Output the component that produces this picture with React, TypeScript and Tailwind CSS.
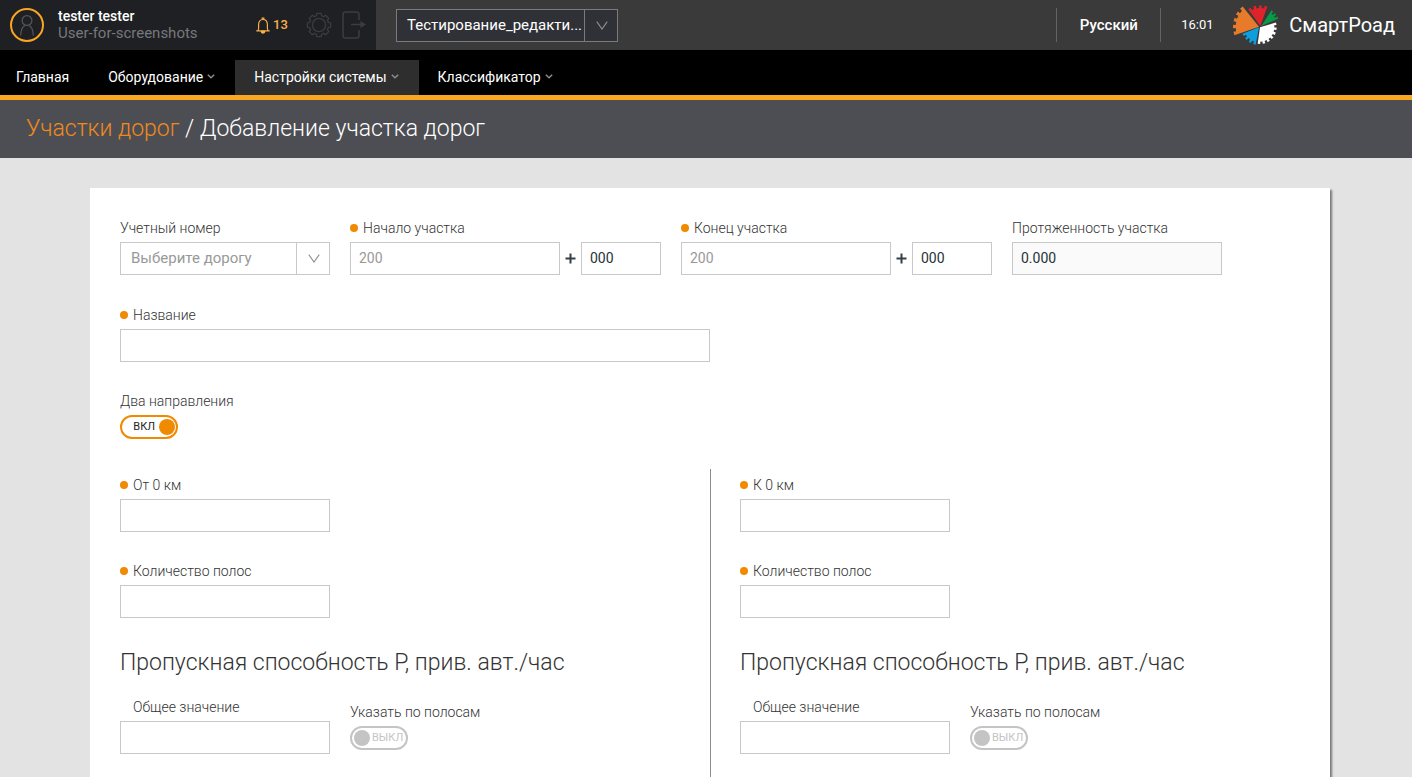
import { useId, useState } from 'react'
import type { ReactNode } from 'react'
import { clsx } from 'clsx'

const NAV_ITEMS = [
  { label: 'Главная', hasMenu: false, active: false },
  { label: 'Оборудование', hasMenu: true, active: false },
  { label: 'Настройки системы', hasMenu: true, active: true },
  { label: 'Классификатор', hasMenu: true, active: false },
]

/* ---------- icons ---------- */

function UserIcon() {
  return (
    <svg viewBox="0 0 34 34" className="size-[34px] shrink-0" fill="none" aria-hidden="true">
      <circle cx="17" cy="17" r="16" stroke="#f9a620" strokeWidth="2" />
      <circle cx="17" cy="12.5" r="4.9" stroke="#55565a" strokeWidth="1.2" />
      <path d="M10.7 27.5c0-5.5 1.2-8 4-10M23.3 27.5c0-5.5-1.2-8-4-10" stroke="#55565a" strokeWidth="1.2" />
    </svg>
  )
}

function BellIcon() {
  return (
    <svg viewBox="0 0 14 17" className="h-[17px] w-3.5 shrink-0" fill="none" stroke="#f9b04a" strokeWidth="1.2" aria-hidden="true">
      <path d="M.3 13.9h13.4M2 13.7c.9-1.2.6-3 .6-5.900 0-3.100 1.800-5.300 4.400-5.300s4.400 2.200 4.400 5.300c0 2.900-.3 4.700.6 5.900" />
      <path d="M6.2 2.5V1h1.6v1.500" />
      <path d="M5.200 14.300c0 2.500 3.600 2.500 3.600 0z" fill="#f9b04a" />
    </svg>
  )
}

function GearIcon() {
  const teeth = Array.from({ length: 8 }, (_, i) => {
    const base = (i * Math.PI) / 4
    return [
      [-0.28, 9.6],
      [-0.19, 11.8],
      [0.19, 11.8],
      [0.28, 9.6],
    ].map(([a, r]) => `${(13 + r * Math.cos(base + a)).toFixed(2)},${(13 + r * Math.sin(base + a)).toFixed(2)}`)
  }).flat()
  return (
    <svg viewBox="0 0 26 26" className="size-[26px]" fill="none" stroke="#3b3c3f" strokeWidth="1.3" strokeLinejoin="round" aria-hidden="true">
      <polygon points={teeth.join(' ')} />
      <circle cx="13" cy="13" r="6.6" />
    </svg>
  )
}

function LogoutIcon() {
  return (
    <svg viewBox="0 0 26 28" className="h-7 w-[26px]" fill="none" stroke="#3b3c3f" strokeWidth="1.5" aria-hidden="true">
      <path d="M17 9V3.500Q17 1 14.500 1H3.500Q1 1 1 3.500v21Q1 27 3.500 27h11Q17 27 17 24.500V19" />
      <path d="M9 13.500h11" />
      <path d="M18.500 10l5.500 3.500-5.500 3.500z" fill="#3b3c3f" stroke="none" />
    </svg>
  )
}

function CaretIcon() {
  return (
    <svg viewBox="0 0 8 5" className="h-[5px] w-2" fill="none" stroke="#8b8b8b" strokeWidth="1.500" aria-hidden="true">
      <path d="M.8.7 4 3.800 7.200.7" />
    </svg>
  )
}

function ArrowIcon() {
  return (
    <svg viewBox="0 0 12 9" className="h-[9px] w-3" fill="none" stroke="#8f8f8f" strokeWidth="1.1" aria-hidden="true">
      <path d="M.8.6 6 8 11.200.6" />
    </svg>
  )
}

// One toothed wedge of the logo. Angles are in degrees, clockwise from the right.
function wedge(cx: number, cy: number, from: number, to: number, outer: number, inner: number, teeth: number) {
  const steps = teeth * 2 - 1
  const pts = [`${cx},${cy}`]
  for (let i = 0; i < steps; i++) {
    const r = i % 2 === 0 ? outer : inner
    for (const k of [i, i + 1]) {
      const a = ((from + ((to - from) * k) / steps) * Math.PI) / 180
      pts.push(`${(cx + r * Math.cos(a)).toFixed(1)},${(cy + r * Math.sin(a)).toFixed(1)}`)
    }
  }
  return pts.join(' ')
}

function LogoIcon() {
  return (
    <svg viewBox="24 12 138 126" className="h-[42px] w-[46px]" aria-hidden="true">
      <polygon points={wedge(102, 80, 161, 231, 78, 70, 5)} fill="#e77b2b" />
      <polygon points={wedge(106, 78, 234, 290, 62, 54, 4)} fill="#df232b" />
      <polygon points={wedge(109, 78, 303, 336, 56, 48, 3)} fill="#069a49" />
      <polygon points={wedge(105, 82, -17, 98, 50, 43, 7)} fill="#ffffff" />
      <polygon points={wedge(102, 82, 101, 159, 53, 45, 4)} fill="#0c9fdd" />
    </svg>
  )
}

/* ---------- form controls ---------- */

const INPUT = 'h-[33px] rounded-none border border-[#c8c8c8] px-2 pb-0.5 text-sm text-[#263238] outline-none placeholder:text-[#999] placeholder:opacity-100'

function Label({ htmlFor, required, indent, children }: { htmlFor: string; required?: boolean; indent?: boolean; children: ReactNode }) {
  return (
    <label htmlFor={htmlFor} className={clsx('flex h-5 items-center gap-[5px] text-sm leading-5 font-light whitespace-nowrap text-[#333]', indent && 'pl-[13px]')}>
      {required && <span className="size-2 rounded-full bg-[#f08a00]" />}
      {children}
    </label>
  )
}

function TextField({ label, required, indent, className }: { label: string; required?: boolean; indent?: boolean; className?: string }) {
  const id = useId()
  return (
    <div className="flex flex-col gap-1">
      <Label htmlFor={id} required={required} indent={indent}>{label}</Label>
      <input id={id} type="text" className={clsx(INPUT, className ?? 'w-[210px]')} />
    </div>
  )
}

function KmField({ label }: { label: string }) {
  const id = useId()
  return (
    <div className="flex flex-col gap-1">
      <Label htmlFor={id} required>{label}</Label>
      <div className="flex items-center">
        <input id={id} type="text" placeholder="200" className={clsx(INPUT, 'w-[210px]')} />
        <svg viewBox="0 0 11 11" className="mx-[5px] size-[11px]" stroke="#33404a" strokeWidth="2" aria-hidden="true">
          <path d="M5.500 0.500v10M0.500 5.500h10" />
        </svg>
        <input type="text" aria-label={`${label}, м`} defaultValue="000" className={clsx(INPUT, 'w-20')} />
      </div>
    </div>
  )
}

function Toggle({ label, defaultOn = false }: { label: string; defaultOn?: boolean }) {
  const id = useId()
  const [on, setOn] = useState(defaultOn)
  return (
    <div className="flex flex-col items-start gap-1">
      <Label htmlFor={id}>{label}</Label>
      <label
        className={clsx(
          'flex h-6 w-[58px] cursor-pointer items-center rounded-full border-2 text-[11px] leading-4',
          on ? 'flex-row-reverse justify-start gap-1 border-[#f08a00] pr-px text-[#222]' : 'gap-0.5 border-[#c4c4c4] pl-0.5 text-[#c4c4c4]',
        )}
      >
        <input id={id} type="checkbox" checked={on} onChange={(e) => setOn(e.target.checked)} className="sr-only" />
        <span className={clsx('size-4 rounded-full', on ? 'bg-[#f08a00]' : 'bg-[#c4c4c4]')} />
        <span>{on ? 'ВКЛ' : 'ВЫКЛ'}</span>
      </label>
    </div>
  )
}

/* ---------- page ---------- */

function TopBar() {
  return (
    <header className="flex h-[50px] bg-[#393a39] text-white">
      <div className="flex w-[376px] shrink-0 items-center bg-[#1f2023] pl-2.5">
        <UserIcon />
        <div className="ml-3.5 w-[198px]">
          <div className="text-sm leading-[17px] font-medium">tester tester</div>
          <div className="text-[15px] leading-[17px] text-[#77787b]">User-for-screenshots</div>
        </div>
        <button type="button" aria-label="Уведомления" className="flex w-[50px] items-center gap-[3px] text-[13px] font-medium text-[#f9b04a]">
          <BellIcon />
          13
        </button>
        <button type="button" aria-label="Настройки" className="mr-2.5">
          <GearIcon />
        </button>
        <button type="button" aria-label="Выход">
          <LogoutIcon />
        </button>
      </div>

      <div className="relative mt-[9px] ml-5 h-[33px] w-[222px] shrink-0">
        <select aria-label="Проект" className="size-full appearance-none border border-[#7b7b7d] bg-[#303137] pr-8 pl-2.5 text-[15px] text-white outline-none">
          <option>Тестирование_редакти...</option>
        </select>
        <span className="pointer-events-none absolute inset-y-0 right-0 flex w-[34px] items-center justify-center border-l border-[#7b7b7d]">
          <ArrowIcon />
        </span>
      </div>

      <div className="ml-auto flex items-center pr-[17px]">
        <button type="button" className="h-[34px] w-[105px] border-x border-[#646464] text-[15px] font-medium">Русский</button>
        <time className="w-[72px] text-center text-[13px]">16:01</time>
        <a href="#" className="flex items-center gap-2.5 text-xl">
          <LogoIcon />
          СмартРоад
        </a>
      </div>
    </header>
  )
}

function MainNav() {
  return (
    <nav className="flex h-[50px] items-end border-b-5 border-[#f9a620] bg-black text-sm text-white">
      {NAV_ITEMS.map(({ label, hasMenu, active }, i) => (
        <a
          key={label}
          href="#"
          className={clsx('flex h-[35px] items-center gap-1 pr-5 pb-0.5', i === 0 ? 'pl-4' : 'pl-[19px]', active && 'bg-[#2e2e2e]')}
        >
          {label}
          {hasMenu && <CaretIcon />}
        </a>
      ))}
    </nav>
  )
}

function Direction({ title }: { title: string }) {
  return (
    <section className="flex flex-col gap-[29px] pt-1.5">
      <TextField label={title} required />
      <TextField label="Количество полос" required />
      <div>
        <h2 className="text-[23px] leading-8 font-light text-[#333]">Пропускная способность P, прив. авт./час</h2>
        <div className="mt-[18px] flex gap-5">
          <TextField label="Общее значение" indent />
          <div className="pt-[5px]">
            <Toggle label="Указать по полосам" />
          </div>
        </div>
      </div>
    </section>
  )
}

export default function App() {
  return (
    <div className="flex min-h-screen flex-col bg-[#e3e3e3] font-['Roboto','Liberation_Sans',sans-serif]">
      <TopBar />
      <MainNav />

      <div className="flex h-[58px] items-center bg-[#4d4e53] pl-[26px]">
        <h1 className="text-[23px] font-light text-white">
          <a href="#" className="text-[#f08a1c]">Участки дорог</a> / Добавление участка дорог
        </h1>
      </div>

      <main className="flex flex-1 flex-col pt-[30px] pr-[82px] pl-[90px]">
        <form className="flex flex-1 flex-col bg-white px-[30px] pt-[30px] shadow-[2px_2px_2px_#777]">
          <div className="flex flex-wrap gap-x-5 gap-y-[30px]">
            <div className="flex flex-col gap-1">
              <Label htmlFor="road">Учетный номер</Label>
              <div className="relative h-[33px] w-[210px]">
                <select id="road" className="size-full appearance-none border border-[#c8c8c8] bg-white pr-9 pl-2.5 text-[15px] text-[#999] outline-none">
                  <option>Выберите дорогу</option>
                </select>
                <span className="pointer-events-none absolute inset-y-0 right-0 flex w-[34px] items-center justify-center border-l border-[#c8c8c8]">
                  <ArrowIcon />
                </span>
              </div>
            </div>
            <KmField label="Начало участка" />
            <KmField label="Конец участка" />
            <div className="flex flex-col gap-1">
              <Label htmlFor="length">Протяженность участка</Label>
              <input id="length" type="text" readOnly value="0.000" className={clsx(INPUT, 'w-[210px] bg-[#fafafa]')} />
            </div>
          </div>

          <div className="mt-[30px]">
            <TextField label="Название" required className="w-[590px]" />
          </div>
          <div className="mt-[29px]">
            <Toggle label="Два направления" defaultOn />
          </div>

          <div className="mt-[30px] grid flex-1 grid-cols-2">
            <Direction title="От 0 км" />
            <div className="border-l border-[#8a8b90] pb-[23px] pl-[29px]">
              <Direction title="К 0 км" />
            </div>
          </div>
        </form>
      </main>
    </div>
  )
}
